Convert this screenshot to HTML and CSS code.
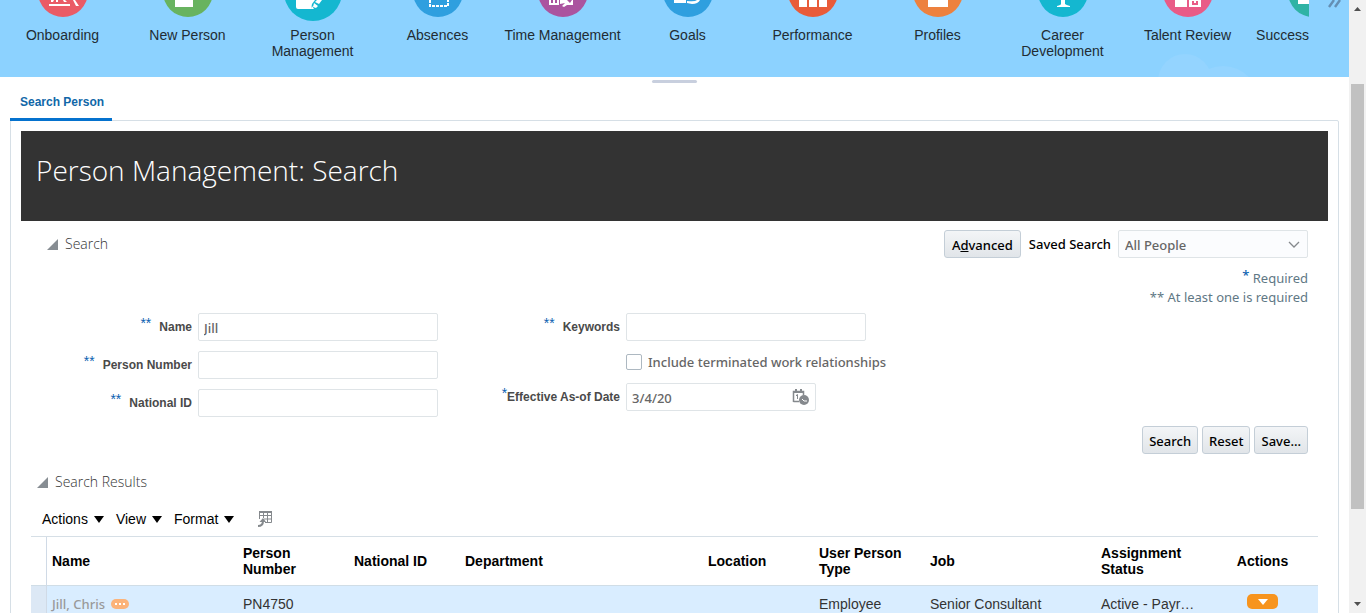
FILE: index.html
```html
<!DOCTYPE html>
<html lang="en">
<head>
<meta charset="utf-8">
<title>Person Management: Search</title>
<link rel="stylesheet" href="styles.css">
</head>
<body>
<div class="window">
  <div class="page">
    <header class="banner">
      <svg class="cloud" width="110" height="24" viewBox="0 0 110 24" aria-hidden="true"><circle cx="30" cy="28" r="27"/><circle cx="68" cy="49" r="36"/></svg>
      <nav class="springboard">
        <a class="app" href="#"><svg width="64" height="21" viewBox="-32 0 64 21" aria-hidden="true"><circle cy="-8" r="25" fill="#ea5b66"/><path d="M-14 4H7V6H-14ZM-12 0H-9L-10 2H-12ZM-7 0H-5V2H-7ZM0 0H2L4 2H1ZM10 0H12L16 6H13Z" fill="#fff"/></svg><span>Onboarding</span></a>
        <a class="app" href="#"><svg width="64" height="21" viewBox="-32 0 64 21" aria-hidden="true"><circle cy="-8" r="25" fill="#68b35f"/><path d="M-13 0H5V7H-13Z" fill="#fff"/></svg><span>New Person</span></a>
        <a class="app" href="#"><svg width="64" height="21" viewBox="-32 0 64 21" aria-hidden="true"><circle cy="-8" r="29" fill="#14b7d0"/><path d="M-17 0H2L-1 4L-2 9H-15Q-17 9-17 7ZM4 0H9L6 4L2 2ZM1 3L5 6L3 8L0 7ZM-1 6L1 9H-2Z" fill="#fff"/></svg><span>Person<br>Management</span></a>
        <a class="app" href="#"><svg width="64" height="21" viewBox="-32 0 64 21" aria-hidden="true"><circle cy="-8" r="25" fill="#2f9fdf"/><path d="M-8 0V6H10V0" fill="none" stroke="#fff" stroke-width="2" stroke-dasharray="3 1"/></svg><span>Absences</span></a>
        <a class="app" href="#"><svg width="64" height="21" viewBox="-32 0 64 21" aria-hidden="true"><circle cy="-8" r="25" fill="#ab549f"/><path d="M-14 0H-4V5H-14ZM-3 0H4L7 3L9 0H10V5H4L1 7L-1 6L2 3L-3 4Z" fill="#fff"/><path d="M-12 0H-10V3H-12ZM-8 0H-6V3H-8Z" fill="#ab549f"/></svg><span>Time Management</span></a>
        <a class="app" href="#"><svg width="64" height="21" viewBox="-32 0 64 21" aria-hidden="true"><circle cy="-8" r="25" fill="#2f9fdf"/><path d="M-14 0H-2V3H-14ZM9 0H12Q10 4 4 4L-1 3V1Q7 2 9 0Z" fill="#fff"/></svg><span>Goals</span></a>
        <a class="app" href="#"><svg width="64" height="21" viewBox="-32 0 64 21" aria-hidden="true"><circle cy="-8" r="25" fill="#e95b39"/><path d="M-14 0H-6V7H-14ZM-4 0H4V7H-4ZM6 0H14V7H6Z" fill="#fff"/></svg><span>Performance</span></a>
        <a class="app" href="#"><svg width="64" height="21" viewBox="-32 0 64 21" aria-hidden="true"><circle cy="-8" r="25" fill="#ed813e"/><path d="M-10 0H10V7H-10Z" fill="#fff"/></svg><span>Profiles</span></a>
        <a class="app" href="#"><svg width="64" height="21" viewBox="-32 0 64 21" aria-hidden="true"><circle cy="-8" r="25" fill="#14b7d0"/><path d="M-2 0H2V4Q3 5 7 6V7H-6V6Q-2 5-2 4Z" fill="#fff"/></svg><span>Career<br>Development</span></a>
        <a class="app" href="#"><svg width="64" height="21" viewBox="-32 0 64 21" aria-hidden="true"><circle cy="-8" r="25" fill="#e95b87"/><path d="M-13 0H-1V7H-13ZM1 0H13V7H1Z" fill="#fff"/><path d="M4 1H10V5H4Z" fill="#e95b87"/><path d="M6 1H8V3H6Z" fill="#fff"/></svg><span>Talent Review</span></a>
        <a class="app app-cut" href="#"><svg width="52" height="21" viewBox="-56 0 52 21" aria-hidden="true"><circle cy="-8" r="25" fill="#2fb3a5"/><path d="M-15 0H-4V4H-15Z" fill="#fff"/></svg><span>Success</span></a>
      </nav>
      <button class="more" aria-label="More applications"><svg width="14" height="9" viewBox="0 0 14 9" aria-hidden="true"><path d="M7 0L2 7M13 0L8 7" fill="none" stroke="#648fb3" stroke-width="2.4"/></svg></button>
    </header>
    <div class="tabs">
      <span class="handle"></span>
      <a class="tab" href="#">Search Person</a>
    </div>
    <main class="panel">
      <h1 class="title">Person Management: Search</h1>
      <section class="query">
        <div class="query-head">
          <h2 class="heading"><svg width="11" height="11" viewBox="0 0 11 11" aria-hidden="true"><path d="M11 0V11H0Z" fill="#878d93"/></svg>Search</h2>
          <button class="btn btn-wide">A<u>d</u>vanced</button>
          <label class="saved-label" for="saved">Saved Search</label>
          <div class="select-box">
            <select id="saved"><option>All People</option></select>
            <svg width="12" height="8" viewBox="0 0 12 8" aria-hidden="true"><path d="M1 1L6 6L11 1" fill="none" stroke="#85898d" stroke-width="1.3"/></svg>
          </div>
        </div>
        <div class="legend">
          <span><b class="star">*</b> Required</span>
          <span>** At least one is required</span>
        </div>
        <form class="fields">
          <div class="column">
            <div class="field"><label for="name"><b class="star wide">**</b>Name</label><input id="name" type="text" value="Jill"></div>
            <div class="field"><label for="number"><b class="star wide">**</b>Person Number</label><input id="number" type="text"></div>
            <div class="field"><label for="national"><b class="star wide">**</b>National ID</label><input id="national" type="text"></div>
          </div>
          <div class="column column-right">
            <div class="field"><label for="keywords"><b class="star wide">**</b>Keywords</label><input id="keywords" type="text"></div>
            <div class="check"><input id="terminated" type="checkbox"><label for="terminated">Include terminated work relationships</label></div>
            <div class="field"><label for="date"><b class="star">*</b>Effective As-of Date</label>
              <div class="date-box"><input id="date" type="text" value="3/4/20"><button type="button" aria-label="Select date"><svg width="18" height="18" viewBox="0 0 18 18" aria-hidden="true"><path d="M1.500 14V3.500H11.500V7M1.500 13.500H7" fill="none" stroke="#85898d" stroke-width="1.500"/><path d="M1 3H12V5H1ZM3 1H5V4H3ZM8 1H10V4H8ZM4 7L6 6V11H5V8H4Z" fill="#85898d"/><circle cx="12" cy="12" r="5" fill="#85898d"/><path d="M10 11L12 13H15" fill="none" stroke="#fff"/></svg></button></div>
            </div>
          </div>
        </form>
        <div class="buttons">
          <button class="btn">Search</button>
          <button class="btn">Reset</button>
          <button class="btn">Save...</button>
        </div>
      </section>
      <section class="results">
        <h2 class="heading heading-results"><svg width="11" height="11" viewBox="0 0 11 11" aria-hidden="true"><path d="M11 0V11H0Z" fill="#878d93"/></svg>Search Results</h2>
        <div class="toolbar">
          <button class="menu">Actions<i class="caret"></i></button>
          <button class="menu">View<i class="caret"></i></button>
          <button class="menu">Format<i class="caret"></i></button>
          <button class="detach" aria-label="Detach"><svg width="16" height="16" viewBox="0 0 16 16" aria-hidden="true"><path d="M2.500 8V.5H14.500V11.500H8M2 4.500H14M7 8H14M6.500 1V7M10.500 1V11" fill="none" stroke="#85898d"/><path d="M2 0H15V2H2Z" fill="#85898d"/><path d="M1 15Q6 15 6 10" fill="none" stroke="#85898d" stroke-width="2"/><path d="M2.500 11L6 7L9 11Z" fill="#85898d"/></svg></button>
        </div>
        <table class="grid">
          <colgroup><col class="c-row"><col class="c-name"><col class="c-std"><col class="c-std"><col class="c-dept"><col class="c-std"><col class="c-std"><col class="c-job"><col class="c-std"><col class="c-std"></colgroup>
          <thead><tr><th class="rowhead"></th><th>Name</th><th>Person Number</th><th>National ID</th><th>Department</th><th>Location</th><th>User Person Type</th><th>Job</th><th>Assignment Status</th><th class="center">Actions</th></tr></thead>
          <tbody><tr><td class="rowhead"></td><td><div class="person-cell"><a class="person" href="#">Jill, Chris</a><button class="dots" aria-label="More information"><svg width="18" height="10" viewBox="0 0 18 10" aria-hidden="true"><path d="M4 4H6V6H4ZM8 4H10V6H8ZM12 4H14V6H12Z" fill="#fff"/></svg></button></div></td><td>PN4750</td><td></td><td></td><td></td><td>Employee</td><td>Senior Consultant</td><td>Active - Payr…</td><td class="center"><button class="pill" aria-label="Row actions"><svg width="10" height="6" viewBox="0 0 10 6" aria-hidden="true"><path d="M0 0H10L5 6Z" fill="#fff"/></svg></button></td></tr></tbody>
        </table>
      </section>
    </main>
  </div>
  <div class="scrollbar" aria-hidden="true">
    <svg width="7" height="4" viewBox="0 0 7 4"><path d="M0 4L3.500 0L7 4Z" fill="#505050"/></svg>
    <div class="track"><div class="thumb"></div></div>
    <svg width="7" height="4" viewBox="0 0 7 4"><path d="M0 0H7L3.500 4Z" fill="#505050"/></svg>
  </div>
</div>
</body>
</html>
```
FILE: styles.css
```css
* { box-sizing: border-box; }
body { margin: 0; font-family: "Liberation Sans", Arial, sans-serif; font-size: 14px; line-height: 16px; color: #333; background: #fff; }
button, input, select { font: inherit; color: inherit; margin: 0; }
button { background: none; border: 0; padding: 0; }
a { color: inherit; text-decoration: none; }
h1, h2 { margin: 0; font-weight: 300; }
svg { display: block; flex: none; }

.window { display: grid; grid-template-columns: 1fr 17px; height: 100vh; overflow: hidden; }
.page { min-width: 0; overflow: hidden; }

.scrollbar { display: flex; flex-direction: column; align-items: center; background: #f1f1f1; padding: 7px 2px; }
.track { flex: 1; align-self: stretch; padding-top: 73px; }
.thumb { height: 82%; background: #c1c1c1; }

.banner { position: relative; display: flex; align-items: flex-start; height: 77px; background: #8cd2ff; }
.cloud { position: absolute; right: 84px; bottom: 0; fill: #94d4ff; }
.springboard { position: relative; display: flex; flex: 1; min-width: 0; margin-right: 18px; overflow: hidden; }
.app { display: flex; flex: 0 0 125px; flex-direction: column; align-items: center; gap: 6px; color: #222c33; text-align: center; white-space: nowrap; }
.app-cut { flex: 0 0 59px; align-items: flex-end; }
.more { position: relative; margin-right: 8px; }

.tabs { display: flex; flex-direction: column; align-items: flex-start; height: 44px; padding: 3px 10px 0; }
.handle { align-self: center; width: 45px; height: 3px; border-radius: 2px; background: #c8cfde; }
.tab { position: relative; margin-top: 8px; padding: 3px 8px 0 10px; height: 30px; border-bottom: 3px solid #0572ce; font-size: 12px; line-height: 16px; font-weight: bold; color: #1167a8; }

.panel { margin: -1px 10px 0; padding: 10px; border: 1px solid #d6dfe6; border-radius: 2px; font-family: "Noto Sans", "Open Sans", sans-serif; }
.title { height: 90px; padding: 19px 15px; background: #333; color: #fff; font-family: "Open Sans", sans-serif; font-size: 28px; line-height: 40px; font-weight: 300; }

.query { padding: 9px 20px 0 26px; }
.query-head { display: flex; align-items: center; }
.heading { display: flex; align-items: center; gap: 7px; margin-right: auto; font-family: "Open Sans", sans-serif; font-size: 14px; line-height: 20px; color: #333; }
.btn { height: 28px; padding: 1px 6px 0; border: 1px solid #c4ced7; border-radius: 3px; background: linear-gradient(#f3f5f7, #e1e5e9); color: #000; font-size: 13px; font-weight: 500; }
.btn-wide { padding: 1px 7px 0; }
.saved-label { margin: 0 7px 0 8px; font-size: 13px; font-weight: 500; color: #000; }
.select-box { position: relative; width: 190px; }
.select-box select { appearance: none; width: 100%; height: 28px; padding: 1px 6px 0; border: 1px solid #dfe4e7; border-radius: 2px; background: #fbfcfe; color: #666; font-size: 13px; font-weight: 500; }
.select-box svg { position: absolute; right: 8px; top: 11px; }
.legend { display: flex; flex-direction: column; align-items: flex-end; margin-top: 11px; font-size: 13px; line-height: 19px; color: #5f7885; }
.star { color: #0b61b0; font-weight: 500; line-height: 10px; vertical-align: 3px; }
.wide { margin-right: 8px; }

.fields { display: flex; padding-top: 6px; }
.column { display: flex; flex-direction: column; gap: 10px; width: 391px; }
.column-right { width: 428px; }
.field { display: flex; align-items: center; gap: 6px; }
.field label { flex: 1; padding-bottom: 2px; text-align: right; font-family: "Liberation Sans", Arial, sans-serif; font-size: 12px; line-height: 16px; font-weight: bold; color: #4a4a4a; }
.field .star { font-size: 14px; }
.field input { width: 240px; height: 28px; padding: 2px 5px 0; border: 1px solid #dfe4e7; border-radius: 2px; background: #fff; color: #666; font-size: 13px; font-weight: 500; }
.check { display: flex; align-items: center; gap: 6px; margin: 3px 0 3px 188px; height: 16px; white-space: nowrap; font-size: 13px; font-weight: 500; color: #666; }
.check input { appearance: none; flex: none; width: 16px; height: 16px; border: 1px solid #adb8c1; border-radius: 2px; background: #fff; }
.date-box { display: flex; align-items: center; width: 190px; margin-right: 50px; border: 1px solid #dfe4e7; border-radius: 2px; }
.date-box input { flex: 1; min-width: 0; height: 26px; border: 0; }
.date-box button { margin-right: 5px; }
.buttons { display: flex; justify-content: flex-end; gap: 4px; margin-top: 9px; }

.results { padding: 18px 10px 0; }
.heading-results { padding-left: 6px; }
.toolbar { display: flex; align-items: center; gap: 12px; height: 44px; padding: 10px 11px 0; font-family: "Liberation Sans", Arial, sans-serif; color: #000; }
.menu { display: flex; align-items: center; gap: 6px; }
.caret { border: 5px solid transparent; border-top: 7px solid #000; border-bottom: 0; }
.detach { margin-left: 11px; }

.grid { width: 100%; table-layout: fixed; border-collapse: separate; border-spacing: 0; border-top: 1px solid #d6dfe6; font-family: "Liberation Sans", Arial, sans-serif; }
.c-row { width: 16px; }
.c-std { width: 111px; }
.c-name { width: 191px; }
.c-job { width: 171px; }
.grid th, .grid td { padding: 0 5px; text-align: left; }
.grid th { height: 49px; border-bottom: 1px solid #d0dde6; color: #000; }
.grid td { height: 37px; padding-top: 10px; background: #d9edff; color: #333; white-space: nowrap; vertical-align: top; }
.grid .rowhead { padding: 0; border-right: 1px solid #d0dae6; }
.grid td.rowhead { background: #dce8f5; }
.grid .center { text-align: center; }
.grid td.center { padding-top: 8px; }
.person-cell { display: flex; align-items: center; gap: 6px; }
.person { font-family: "Noto Sans", "Open Sans", sans-serif; font-size: 13px; font-weight: 500; color: #999; }
.dots { border-radius: 5px; background: #fbb37a; }
.pill { display: flex; align-items: center; justify-content: center; width: 31px; height: 15px; margin: 0 auto; border-radius: 5px; background: #f7941e; }
```
